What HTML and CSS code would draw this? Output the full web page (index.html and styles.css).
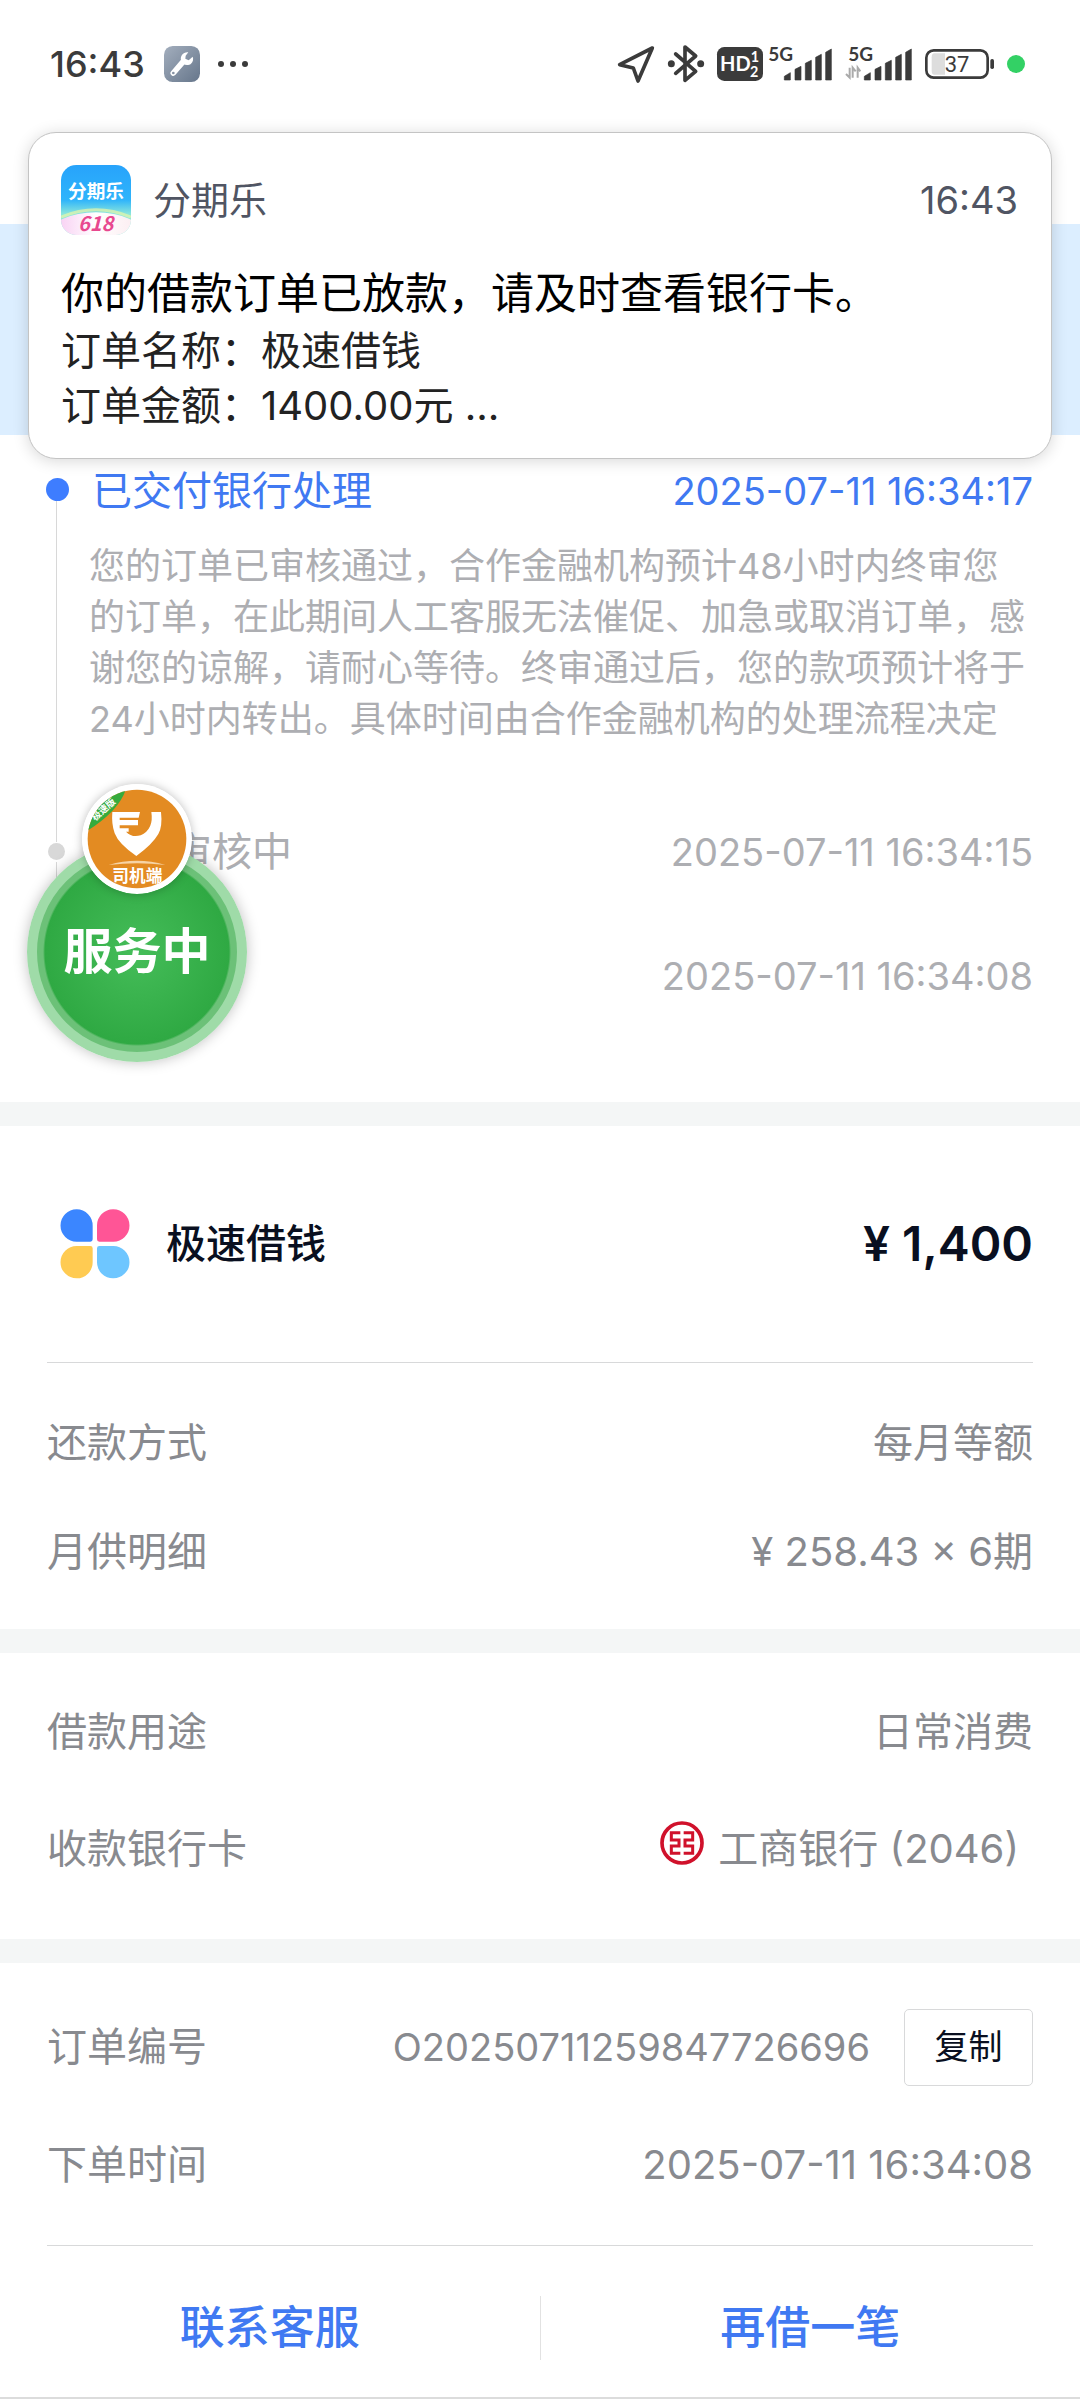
FILE: index.html
```
<!doctype html>
<html lang="zh-CN">
<head>
    <meta charset="UTF-8">
    <meta name="viewport" content="width=device-width, initial-scale=1.0">
    <title>订单详情</title>
    <link rel="stylesheet" href="styles.css">
</head>
<body>
<div class="page">
    <header class="status">
        <div class="status-left">
            <span class="clock">16:43</span>
            <svg class="tool" width="36" height="36" viewBox="0 0 108 108">
                <defs>
                    <linearGradient id="steel" x1="0" y1="0" x2="1" y2="1">
                        <stop offset="0" stop-color="#a3aebd"/>
                        <stop offset="1" stop-color="#66768b"/>
                    </linearGradient>
                </defs>
                <rect width="108" height="108" rx="26" fill="url(#steel)"/>
                <path d="M28 81L58 46" stroke="#fff" stroke-width="17" stroke-linecap="round"/>
                <path d="M73 19C58 17 48 30 51 43C54 56 70 62 81 53C87 48 89 39 86 32L74 43L64 38L65 29Z" fill="#fff"/>
                <circle cx="28" cy="81" r="4" fill="#8793a4"/>
            </svg>
            <svg width="32" height="8" viewBox="0 0 32 8" fill="#3b3b3b">
                <circle cx="4" cy="4" r="3"/>
                <circle cx="16" cy="4" r="3"/>
                <circle cx="28" cy="4" r="3"/>
            </svg>
        </div>
        <div class="status-right">
            <svg width="38" height="40" viewBox="0 0 114 120" fill="none" stroke="#3b3b3b" stroke-width="11" stroke-linejoin="round">
                <path d="M106 12L8 62L49 72L63 111Z"/>
            </svg>
            <svg width="38" height="40" viewBox="0 0 114 120" fill="none" stroke="#3b3b3b" stroke-width="11" stroke-linecap="round" stroke-linejoin="round">
                <path d="M26 30L86 82L54 109V9L86 36L26 88"/>
                <circle cx="13" cy="59" r="5" fill="#3b3b3b"/>
                <circle cx="101" cy="59" r="5" fill="#3b3b3b"/>
            </svg>
            <svg width="46" height="34" viewBox="0 0 138 102" class="glyph">
                <rect width="138" height="102" rx="22" fill="#3b3b3b"/>
                <text x="9" y="73" font-size="60" fill="#fff">HD</text>
                <text x="101" y="46" font-size="43" fill="#fff">1</text>
                <text x="99" y="90" font-size="43" fill="#fff">2</text>
            </svg>
            <svg width="64" height="40" viewBox="0 -9 192 120" class="glyph signal" fill="#3b3b3b">
                <text x="-2" y="43" font-size="57">5G</text>
                <path d="M46 99V88L64 77V99ZM78 99V67L96 58V99ZM109 99V49L127 40V99ZM140 99V31L157 22V99ZM170 99V16L187 6V99Z" stroke="#3b3b3b" stroke-width="2" stroke-linejoin="round"/>
            </svg>
            <svg width="68" height="40" viewBox="0 -9 204 120" class="glyph" fill="#3b3b3b">
                <text x="10" y="43" font-size="57">5G</text>
                <path d="M14 62V92L3 81M23 92V62L32 73M38 92V62L46 73" fill="none" stroke="#aaa" stroke-width="6"/>
                <path d="M58 99V88L76 77V99ZM90 99V67L108 58V99ZM121 99V49L139 40V99ZM152 99V31L169 22V99ZM182 99V16L199 6V99Z" stroke="#3b3b3b" stroke-width="2" stroke-linejoin="round"/>
            </svg>
            <svg width="70" height="32" viewBox="0 0 210 96" class="battery">
                <path d="M28 16H60V80H28Q20 80 20 68V28Q20 16 28 16Z" fill="#ddd"/>
                <rect x="4" y="7" width="184" height="82" rx="22" fill="none" stroke="#3b3b3b" stroke-width="8"/>
                <rect x="196" y="33" width="11" height="30" rx="5" fill="#3b3b3b"/>
                <text x="96" y="71" font-size="66" text-anchor="middle" fill="#3b3b3b">37</text>
            </svg>
            <span class="live"></span>
        </div>
    </header>

    <div class="banner"></div>

    <section class="timeline">
        <ul class="steps">
            <li class="step current">
                <div class="step-head">
                    <h2>已交付银行处理</h2>
                    <time>2025-07-11 16:34:17</time>
                </div>
                <p>您的订单已审核通过，合作金融机构预计48小时内终审您<br>的订单，在此期间人工客服无法催促、加急或取消订单，感<br>谢您的谅解，请耐心等待。终审通过后，您的款项预计将于<br>24小时内转出。具体时间由合作金融机构的处理流程决定</p>
            </li>
            <li class="step review">
                <div class="step-head">
                    <h2>审核中</h2>
                    <time>2025-07-11 16:34:15</time>
                </div>
            </li>
            <li class="step first">
                <div class="step-head">
                    <time>2025-07-11 16:34:08</time>
                </div>
            </li>
        </ul>
    </section>

    <section class="card loan">
        <div class="product">
            <svg width="70" height="70" viewBox="0 0 210 210">
                <path d="M50 1A48 48 0 0 1 98 50V91Q98 98 91 98H50A48 48 0 0 1 50 1Z" fill="#3b86ff"/>
                <path d="M160 1A48 48 0 0 0 111 50V91Q111 98 118 98H160A48 48 0 0 0 160 1Z" fill="#ff5596"/>
                <path d="M50 208A48 48 0 0 0 98 160V118Q98 111 91 111H50A48 48 0 0 0 50 208Z" fill="#ffcb52"/>
                <path d="M160 208A48 48 0 0 1 111 160V118Q111 111 118 111H160A48 48 0 0 1 160 208Z" fill="#6ec6ff"/>
            </svg>
            <h3>极速借钱</h3>
            <strong>¥ 1,400</strong>
        </div>
        <dl>
            <div class="row"><dt>还款方式</dt><dd>每月等额</dd></div>
            <div class="row"><dt>月供明细</dt><dd>¥ 258.43 × 6期</dd></div>
        </dl>
    </section>

    <section class="card bank">
        <dl>
            <div class="row"><dt>借款用途</dt><dd>日常消费</dd></div>
            <div class="row">
                <dt>收款银行卡</dt>
                <dd class="bank-card">
                    <svg width="44" height="44" viewBox="0 0 132 132" fill="none" stroke="#d0112b">
                        <circle cx="66" cy="66" r="60" stroke-width="11"/>
                        <path d="M61 35H34V57H57V75H34V97H61M71 35H98V57H75V75H98V97H71" stroke-width="9"/>
                    </svg>
                    <span>工商银行 (2046)</span>
                </dd>
            </div>
        </dl>
    </section>

    <section class="card order">
        <dl>
            <div class="row">
                <dt>订单编号</dt>
                <dd><span class="order-no">O20250711259847726696</span><button type="button" class="copy">复制</button></dd>
            </div>
            <div class="row"><dt>下单时间</dt><dd>2025-07-11 16:34:08</dd></div>
        </dl>
    </section>

    <footer class="actions">
        <button type="button">联系客服</button>
        <button type="button">再借一笔</button>
    </footer>

    <aside class="notice">
        <div class="notice-head">
            <svg width="70" height="70" viewBox="0 0 210 210" class="app">
                <defs>
                    <linearGradient id="sky" x1="0" y1="0" x2="0" y2="1">
                        <stop offset="0" stop-color="#27a3fb"/>
                        <stop offset=".5" stop-color="#2fb4fb"/>
                        <stop offset=".7" stop-color="#8be6dc"/>
                    </linearGradient>
                    <linearGradient id="hill" x1="0" y1="0" x2="1" y2="0">
                        <stop offset="0" stop-color="#f7c4f0"/>
                        <stop offset=".5" stop-color="#fff"/>
                        <stop offset="1" stop-color="#fbe9ee"/>
                    </linearGradient>
                    <clipPath id="tile"><rect width="210" height="210" rx="46"/></clipPath>
                </defs>
                <g clip-path="url(#tile)">
                    <rect width="210" height="210" fill="url(#sky)"/>
                    <path d="M0 156Q105 112 210 156" fill="none" stroke="#e9f7a8" stroke-width="9" opacity=".7"/>
                    <ellipse cx="105" cy="208" rx="140" ry="66" fill="url(#hill)"/>
                </g>
                <text x="105" y="100" font-size="56" text-anchor="middle" fill="#fff">分期乐</text>
                <text x="104" y="197" font-size="60" text-anchor="middle" fill="#e8488f" font-style="italic">618</text>
            </svg>
            <span class="app-name">分期乐</span>
            <time>16:43</time>
        </div>
        <h1>你的借款订单已放款，请及时查看银行卡。</h1>
        <p>订单名称：极速借钱<br>订单金额：1400.00元 …</p>
    </aside>

    <button type="button" class="bubble">
        <svg width="110" height="110" viewBox="0 0 330 330" class="driver">
            <defs>
                <clipPath id="disc"><circle cx="165" cy="165" r="148"/></clipPath>
            </defs>
            <circle cx="165" cy="165" r="165" fill="#fff"/>
            <g clip-path="url(#disc)">
                <rect width="330" height="330" fill="#e38b22"/>
                <path d="M0 150Q120 80 136 0H0Z" fill="#35ab3d"/>
                <text x="40" y="112" transform="rotate(-42 40 112)" font-size="28" fill="#fff">极速版</text>
                <path d="M91 84H174L170 101H113V108H168V124H113V133H140V143H132Q150 162 176 154Q216 136 208 84H237Q242 128 229 150Q212 180 163 216Q110 180 98 148Q88 120 91 84Z" fill="#fff"/>
                <path d="M80 243Q165 218 250 243Q165 232 80 243Z" fill="#f6d3a4"/>
                <text x="166" y="294" font-size="50" text-anchor="middle" fill="#fff">司机端</text>
            </g>
        </svg>
        <span>服务中</span>
    </button>
</div>
</body>
</html>
```

FILE: styles.css
```
* {
    box-sizing: border-box;
}

html, body {
    margin: 0;
    padding: 0;
}

body {
    background: #fff;
    color: #888a8f;
    font: 40px/56px Inter, "Noto Sans CJK SC", sans-serif;
}

h1, h2, h3, p, ul, dl, dd {
    margin: 0;
    padding: 0;
    font-weight: 400;
}

button {
    padding: 0;
    border: 0;
    background: none;
    font: inherit;
    cursor: pointer;
}

svg {
    display: block;
    flex: none;
}

.page {
    position: relative;
}

/* status bar */
.status {
    display: flex;
    justify-content: space-between;
    align-items: center;
    height: 128px;
    padding: 0 55px 0 50px;
}

.status-left, .status-right {
    display: flex;
    align-items: center;
}

.clock {
    margin-right: 19px;
    color: #3b3b3b;
    font-size: 36px;
    font-weight: 500;
}

.tool {
    margin-right: 17px;
}

.status-right {
    gap: 12px;
}

.glyph {
    overflow: visible;
    font-weight: 700;
}

.glyph text {
    font-family: Lato, sans-serif;
}

.signal {
    margin-left: -6px;
}

.battery text {
    font-family: Roboto, sans-serif;
}

.live {
    width: 18px;
    height: 18px;
    border-radius: 50%;
    background: #33d165;
}

.banner {
    height: 211px;
    margin-top: 96px;
    background: #dceeff;
}

/* progress */
.timeline {
    padding: 28px 47px 98px;
}

.steps {
    list-style: none;
}

.step {
    position: relative;
    padding-left: 45px;
    color: #adaeb2;
}

.step::before {
    content: "";
    position: absolute;
    left: 1px;
    top: 19px;
    width: 17px;
    height: 17px;
    border-radius: 50%;
    background: #d8d8d8;
}

.step:not(:last-child)::after {
    content: "";
    position: absolute;
    left: 9px;
    top: 38px;
    bottom: -18px;
    width: 1px;
    background: #d8d8d8;
}

.step-head {
    display: flex;
    justify-content: space-between;
}

.step-head h2 {
    font-size: 40px;
}

.step-head time {
    margin-left: auto;
    font-size: 38px;
}

.step p {
    margin-left: -3px;
    padding: 22px 0 79px;
    font-size: 36px;
    line-height: 51px;
    white-space: nowrap;
}

.current .step-head {
    color: #4079f2;
}

.current::before {
    left: -1px;
    top: 15px;
    width: 23px;
    height: 23px;
    background: #3e7dff;
}

.review {
    padding-bottom: 68px;
}

.review h2 {
    text-indent: 2em;
}

/* cards */
.card {
    padding: 0 47px;
    border-top: 24px solid #f4f6f6;
}

.row {
    display: flex;
    justify-content: space-between;
    align-items: center;
}

.product {
    display: flex;
    align-items: center;
    height: 237px;
    padding-left: 13px;
    border-bottom: 1px solid #d8d9da;
    color: #090f20;
}

.product h3 {
    margin-left: 36px;
    font-size: 40px;
    font-weight: 500;
}

.product strong {
    margin-left: auto;
    font-size: 48px;
    font-weight: 600;
}

.loan dl {
    padding: 25px 0 23px;
}

.loan .row {
    height: 109px;
}

.bank dl {
    padding: 20px 0 32px;
}

.bank .row {
    height: 117px;
}

.bank-card {
    display: flex;
    gap: 14px;
    padding-right: 14px;
}

.order dl {
    padding: 25px 0 21px;
    border-bottom: 1px solid #d8d9da;
}

.order .row {
    height: 118px;
}

.order dd {
    display: flex;
    align-items: center;
    gap: 34px;
}

.order-no {
    font-size: 38px;
}

.copy {
    width: 129px;
    height: 77px;
    border: 1px solid #d8d9da;
    border-radius: 5px;
    color: #090f20;
    font-size: 34px;
}

.actions {
    display: flex;
    align-items: center;
    padding: 50px 0 37px;
    border-bottom: 2px solid #dcdcdc;
}

.actions button {
    flex: 1;
    height: 64px;
    color: #4079f2;
    font-size: 45px;
    font-weight: 500;
}

.actions button + button {
    border-left: 1px solid #e2e2e2;
}

/* push message over the page */
.notice {
    position: absolute;
    top: 132px;
    left: 28px;
    right: 28px;
    padding: 32px 33px 25px 32px;
    border: 1px solid #c4c4c4;
    border-radius: 28px;
    background: #fff;
    box-shadow: 0 2px 16px rgba(0, 0, 0, .16);
    color: #222;
}

.notice-head {
    display: flex;
    align-items: center;
    margin-bottom: 28px;
    color: #505563;
    font-size: 38px;
}

.app-name {
    margin-left: 22px;
}

.notice-head time {
    margin-left: auto;
}

.notice h1 {
    color: #000;
    font-size: 43px;
    line-height: 60px;
}

.notice p {
    line-height: 55px;
}

.app text, .driver text {
    font-family: "Noto Sans CJK SC", sans-serif;
    font-weight: 700;
}

/* floating assistant */
.bubble {
    position: absolute;
    top: 842px;
    left: 27px;
    display: flex;
    align-items: center;
    justify-content: center;
    width: 220px;
    height: 220px;
    border: 10px solid #9fdba8;
    border-radius: 50%;
    background: radial-gradient(circle, #45bd59 0, #2fa943 92px, #6cc178 94px);
    background-origin: border-box;
    box-shadow: 0 0 14px rgba(0, 0, 0, .25);
    color: #fff;
    font-size: 49px;
    font-weight: 700;
}

.driver {
    position: absolute;
    top: -68px;
    left: 45px;
    border-radius: 50%;
    box-shadow: 0 0 10px rgba(0, 0, 0, .25);
}
```
